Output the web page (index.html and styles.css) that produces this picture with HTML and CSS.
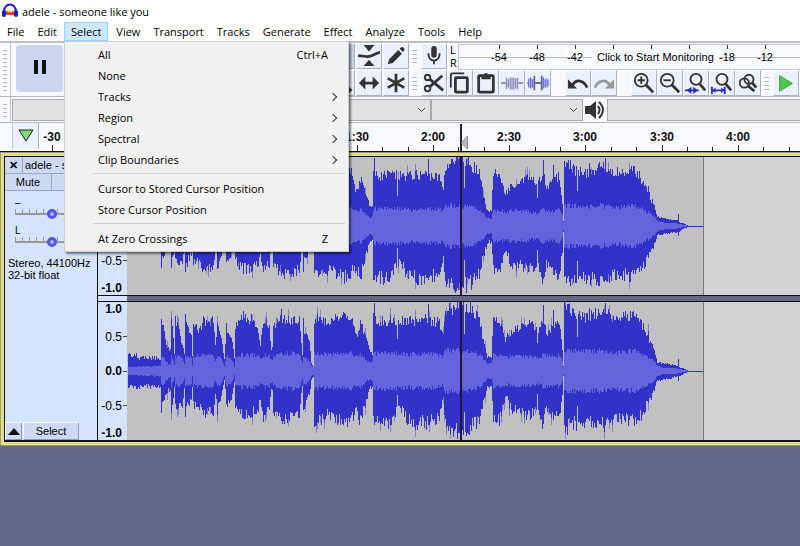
FILE: index.html
```
<!DOCTYPE html>
<html lang="en">
<head>
  <title>adele - someone like you</title>
  <meta charset="utf-8" />
  <meta name="viewport" content="width=device-width, initial-scale=1.0">
  <link rel="stylesheet" href="styles.css">
</head>
<body>

  <header class="titlebar">
    <svg class="logo" viewBox="0 0 16 16" width="16" height="16">
      <path d="M3 10 L5 7 L7 10 L8 6 L9 10 L11 7 L13 10 L13 12 L3 12 Z" fill="#f80" />
      <path d="M3 10.5h10" stroke="#e22" stroke-width="2" />
      <path d="M2 9 C2 -1 14 -1 14 9" fill="none" stroke="#1a1ad0" stroke-width="2" />
      <rect x="0" y="7" width="4" height="7" rx="2" fill="#1a1ad0" />
      <rect x="12" y="7" width="4" height="7" rx="2" fill="#1a1ad0" />
    </svg>
    <h1>adele - someone like you</h1>
  </header>

  <nav class="menubar">
    <button>File</button>
    <button>Edit</button>
    <div class="menu">
      <button class="open">Select</button>
      <ul class="dropdown">
        <li><button>All <span>Ctrl+A</span></button></li>
        <li><button>None</button></li>
        <li><button class="sub">Tracks</button></li>
        <li><button class="sub">Region</button></li>
        <li><button class="sub">Spectral</button></li>
        <li><button class="sub">Clip Boundaries</button></li>
        <li class="separator"></li>
        <li><button>Cursor to Stored Cursor Position</button></li>
        <li><button>Store Cursor Position</button></li>
        <li class="separator"></li>
        <li><button>At Zero Crossings <span>Z</span></button></li>
      </ul>
    </div>
    <button>View</button>
    <button>Transport</button>
    <button>Tracks</button>
    <button>Generate</button>
    <button>Effect</button>
    <button>Analyze</button>
    <button>Tools</button>
    <button>Help</button>
  </nav>

  <div class="toolbars">
    <div class="transport">
      <div class="grabber"></div>
      <button class="pause" aria-label="Pause">
        <svg viewBox="0 0 14 14" width="14" height="14"><path d="M1 0h4v14h-4z M9 0h4v14h-4z" fill="#111" /></svg>
      </button>
    </div>

    <div class="tools">
      <button class="tool selected" aria-label="Selection"></button>
      <button class="tool" aria-label="Envelope">
        <svg viewBox="0 0 24 24">
          <path d="M6 0h12l-6 7z M6 23h12l-6 -7z" fill="#333" />
          <path d="M0 12 C6 11 9 14 14 12 S20 9 24 8" fill="none" stroke="#333" stroke-width="3" />
        </svg>
      </button>
      <button class="tool" aria-label="Draw">
        <svg viewBox="0 0 24 24">
          <path d="M3 21l1.500 -5.500 L14.500 5.500 l4 4 L8.500 19.500 z M16 4l1.500 -1.500 q1.500 -1 3 .5 t.5 3 L19.500 7.500z" fill="#333" />
        </svg>
      </button>
      <button class="tool" aria-label="Zoom">
        <svg viewBox="0 0 24 24"><circle cx="10" cy="10" r="6" fill="none" stroke="#333" stroke-width="3" /><path d="M15 15l7 6" stroke="#333" stroke-width="4" /></svg>
      </button>
      <button class="tool" aria-label="Time Shift">
        <svg viewBox="0 0 24 24"><path d="M1 12l7 -7v5.500h8v-5.500l7 7l-7 7v-5.500h-8v5.500z" fill="#333" /></svg>
      </button>
      <button class="tool" aria-label="Multi">
        <svg viewBox="0 0 24 24"><path d="M12 2v20 M3 7l18 10 M21 7l-18 10" stroke="#333" stroke-width="3" /></svg>
      </button>
    </div>

    <div class="stack">
      <div class="line">
        <div class="grabber"></div>
        <button class="tool" aria-label="Record Meter">
          <svg viewBox="0 0 24 24">
            <rect x="9" y="1" width="6" height="13" rx="3" fill="#333" />
            <path d="M6 9v2a6 6 0 0 0 12 0v-2 M12 17v4" fill="none" stroke="#333" stroke-width="2" />
          </svg>
        </button>
        <div class="channels"><span>L</span><span>R</span></div>
        <div class="meter">
          <span>-54</span><span>-48</span><span>-42</span><span></span><span></span><span></span><span>-18</span><span>-12</span>
          <button class="monitor">Click to Start Monitoring</button>
        </div>
      </div>
      <div class="line">
        <div class="grabber"></div>
        <button class="tool" aria-label="Cut">
          <svg viewBox="0 0 24 24">
            <path d="M7 7.500L22 20 M7 16.500L21 4" stroke="#333" stroke-width="3" />
            <circle cx="5" cy="6" r="3" fill="none" stroke="#333" stroke-width="2" /><circle cx="5" cy="18" r="3" fill="none" stroke="#333" stroke-width="2" />
          </svg>
        </button>
        <button class="tool" aria-label="Copy">
          <svg viewBox="0 0 24 24" fill="none" stroke="#333" stroke-width="2">
            <path d="M2 17v-14q0 -1.500 1.500 -1.500h13" /><rect x="7" y="6" width="13" height="16" rx="1" stroke-width="3" />
          </svg>
        </button>
        <button class="tool" aria-label="Paste">
          <svg viewBox="0 0 24 24"><rect x="4" y="4" width="16" height="18" rx="1" fill="none" stroke="#333" stroke-width="3" /><path d="M7 3h3a2 2 0 0 1 4 0h3v5h-10z" fill="#333" /></svg>
        </button>
        <button class="tool" aria-label="Trim">
          <svg viewBox="0 0 24 24" fill="none" stroke="#8d90b8"><path d="M0 12h6 M19 12h5" stroke-width="2" /><path d="M6 6v13 M8 8v9 M10 6v13 M12 6v13 M14 6v13 M16 7v11 M18 6v13" stroke-width="1.500" /></svg>
        </button>
        <button class="tool" aria-label="Silence">
          <svg viewBox="0 0 24 24" fill="none" stroke="#6b70d0" stroke-width="1.500"><path d="M0 12h2v-5v10 M4 6v12 M6 8v9 M18 6v12 M20 8v9 M22 7v10 M24 9v6" /><path d="M8 4v16 M16 4v16 M8 12h8" stroke="#666a88" stroke-width="2" /></svg>
        </button>
        <button class="tool group" aria-label="Undo">
          <svg viewBox="0 0 24 24"><path d="M6 14C10 8 18 8 22 17" fill="none" stroke="#333" stroke-width="3" /><path d="M1 8v10h10z" fill="#333" /></svg>
        </button>
        <button class="tool" aria-label="Redo">
          <svg viewBox="0 0 24 24"><path d="M18 14C14 8 6 8 2 17" fill="none" stroke="#999" stroke-width="3" /><path d="M23 8v10h-10z" fill="#999" /></svg>
        </button>
        <button class="tool group" aria-label="Zoom In">
          <svg viewBox="0 0 24 24" fill="none" stroke="#333"><circle cx="9" cy="9" r="7" stroke-width="2" /><path d="M14 14l8 8" stroke-width="3" /><path d="M5 9h8 M9 5v8" stroke-width="2" /></svg>
        </button>
        <button class="tool" aria-label="Zoom Out">
          <svg viewBox="0 0 24 24" fill="none" stroke="#333"><circle cx="9" cy="9" r="7" stroke-width="2" /><path d="M14 14l8 8" stroke-width="3" /><path d="M5 9h8" stroke-width="2" /></svg>
        </button>
        <button class="tool" aria-label="Fit Selection">
          <svg viewBox="0 0 24 24" fill="none" stroke="#333"><circle cx="12" cy="8" r="6" stroke-width="2" /><path d="M16 13l6 7" stroke-width="3" /><path d="M0 20h15" stroke="#2b2bd0" stroke-width="2" /><path d="M7 16v8l-5 -4z M9 16v8l5 -4z" fill="#2b2bd0" stroke="none" /></svg>
        </button>
        <button class="tool" aria-label="Fit Project">
          <svg viewBox="0 0 24 24" fill="none" stroke="#333"><circle cx="12" cy="8" r="6" stroke-width="2" /><path d="M16 13l6 7" stroke-width="3" /><path d="M1 20h14 M1 16v8 M15 16v8" stroke="#2b2bd0" stroke-width="2" /><path d="M1 20l4 -3v6z M15 20l-4 -3v6z" fill="#2b2bd0" stroke="none" /></svg>
        </button>
        <button class="tool" aria-label="Zoom Toggle">
          <svg viewBox="0 0 24 24" fill="none" stroke="#333" stroke-width="2"><circle cx="13" cy="8" r="5" /><circle cx="8" cy="12" r="5" /><path d="M16 11l5 6 M12 15l7 6" stroke-width="3" /></svg>
        </button>
        <div class="grabber"></div>
        <button class="tool" aria-label="Play at Speed">
          <svg viewBox="0 0 24 24"><path d="M5 4v17l14 -8.500z" fill="#4fc84f" stroke="#3a9a3a" /></svg>
        </button>
      </div>
    </div>
  </div>

  <div class="devices">
    <div class="grabber"></div>
    <select class="recording" aria-label="Recording Device"><option></option></select>
    <select class="channel-count" aria-label="Recording Channels"><option></option></select>
    <svg class="speaker" viewBox="0 0 22 20" width="22" height="20">
      <path d="M1 6h5l6 -5v18l-6 -5h-5z" fill="#333" />
      <path d="M14 6q3 4 0 8 M15 2q8 8 0 16" fill="none" stroke="#333" stroke-width="2" />
    </svg>
    <select class="playback" aria-label="Playback Device"><option></option></select>
  </div>

  <div class="timeline">
    <button class="pin" aria-label="Pinned Head">
      <svg viewBox="0 0 16 14" width="16" height="14"><path d="M1 1h14l-7 11z" fill="#7ed67e" stroke="#222" /></svg>
    </button>
    <svg class="ruler" height="28" id="ruler"></svg>
  </div>

  <main class="track">
    <section class="panel">
      <div class="row name"><button class="close" aria-label="Close">&#x2715;</button><button class="grow">adele - s</button></div>
      <div class="row"><button class="mute">Mute</button><button class="grow" aria-label="Solo"></button></div>
      <div class="slider">
        <label for="gain">&ndash;</label>
        <input type="range" id="gain" value="50">
      </div>
      <div class="slider">
        <label for="pan">L</label>
        <input type="range" id="pan" value="50">
      </div>
      <p>Stereo, 44100Hz<br>32-bit float</p>
      <div class="bottom">
        <button class="collapse" aria-label="Collapse"><svg viewBox="0 0 12 7" width="12" height="7"><path d="M0 7h12l-6 -7z" fill="#111" /></svg></button>
        <button class="select-track">Select</button>
      </div>
    </section>
    <div class="views">
      <div class="view">
        <ol class="scale covered"><li></li><li></li><li></li><li>-0.5</li><li>-1.0</li></ol>
        <svg class="wave" id="left" width="577" height="138"></svg>
      </div>
      <div class="gap"></div>
      <div class="view">
        <ol class="scale"><li>1.0</li><li>0.5</li><li>0.0</li><li>-0.5</li><li>-1.0</li></ol>
        <svg class="wave" id="right" width="577" height="138"></svg>
      </div>
    </div>
  </main>

  <script src="wave.js"></script>
</body>
</html>
```

FILE: styles.css
```
* {
  box-sizing: border-box;
}

body {
  margin: 0;
  min-height: 100vh;
  background: #646785;
  color: #000;
  font-family: "Open Sans", "Noto Sans", sans-serif;
  font-size: 12px;
}

button {
  margin: 0;
  padding: 0;
  border: 0;
  background: none;
  font: inherit;
  color: inherit;
}

.titlebar {
  display: flex;
  align-items: center;
  gap: 4px;
  height: 22px;
  padding-left: 2px;
  background: #fff;
}

h1 {
  margin: 0;
  font-size: 11px;
  font-weight: normal;
}

/* menus */

.menubar {
  display: flex;
  gap: 1px;
  height: 19px;
  padding-left: 1px;
  background: #fff;
  font-size: 11px;
}

.menubar > button,
.menu > button {
  height: 19px;
  padding: 0 6px;
}

.menu {
  position: relative;
  margin-right: 1px;
}

.menu > .open {
  background: #cce8ff;
  border: 1px solid #99d1ff;
}

.dropdown {
  position: absolute;
  z-index: 2;
  top: 19px;
  left: 0;
  width: 285px;
  margin: 0;
  padding: 2px 0;
  list-style: none;
  background: #f1f1f1;
  border: 1px solid #ccc;
  box-shadow: 2px 2px 2px rgba(0, 0, 0, 0.5);
}

.dropdown button {
  display: flex;
  justify-content: space-between;
  align-items: center;
  width: 100%;
  height: 21px;
  padding: 0 20px 0 33px;
}

.dropdown .sub::after {
  content: "";
  width: 5px;
  height: 5px;
  margin-right: -8px;
  border: solid #333;
  border-width: 1px 1px 0 0;
  transform: rotate(45deg);
}

.separator {
  height: 1px;
  margin: 3px 3px 4px 28px;
  background: #d0d0d0;
}

/* toolbars */

.toolbars {
  display: flex;
  height: 56px;
  border-top: 2px solid #c0c0c4;
  border-bottom: 1px solid #b8b8c0;
  background: #f7f9ff;
}

.grabber {
  flex: none;
  width: 11px;
  border-right: 1px solid #c4c4cc;
  background: repeating-linear-gradient(#f7f9ff 0 3px, #bbb 3px 4px) content-box;
  padding: 4px 3px;
}

.transport {
  display: flex;
  width: 329px;
}

.pause {
  width: 47px;
  height: 47px;
  margin: 2px 0 0 5px;
  border-radius: 4px;
  background: #cad6f0;
}

.tools {
  display: grid;
  grid-template-columns: repeat(3, 26px);
  grid-template-rows: 26px 26px;
  gap: 1px;
}

.tool {
  flex: none;
  display: grid;
  place-items: center;
  width: 26px;
  height: 26px;
  border: 1px solid #fff;
  border-right-color: #a8b0c4;
  border-bottom-color: #a8b0c4;
  background: #eaf0fd;
}

.tool svg {
  width: 22px;
  height: 22px;
}

.selected {
  background: #c8d4ee;
}

.stack {
  flex: 1;
  min-width: 0;
}

.line {
  display: flex;
  height: 27px;
  overflow: hidden;
}

.line .grabber {
  border: 0;
  margin-right: 1px;
}

.group {
  margin-left: 14px;
}

.channels {
  display: grid;
  align-content: start;
  width: 11px;
  padding-left: 3px;
  font-size: 11px;
  line-height: 13px;
}

.meter {
  flex: 1;
  position: relative;
  display: flex;
  height: 26px;
  margin-top: 1px;
  padding-left: 21px;
  border: 1px solid #c4c4cc;
  border-right: 0;
  background: linear-gradient(#bbb, #bbb) 0 12px / 100% 1px no-repeat;
  font: 11px/24px "Liberation Sans", sans-serif;
}

.meter span {
  flex: none;
  width: 38px;
  text-align: center;
  background: linear-gradient(#333, #333) 50% 0 / 1px 4px no-repeat;
}

.monitor {
  position: absolute;
  left: 133px;
  top: 4px;
  padding: 0 5px;
  background: #f7f9ff;
  line-height: 17px;
  white-space: nowrap;
}

/* device row */

.devices {
  display: flex;
  height: 26px;
  background: #f7f9ff;
  border-bottom: 1px solid #b8b8c0;
}

.devices select {
  appearance: none;
  height: 22px;
  margin-top: 2px;
  border: 1px solid #aaa;
  border-radius: 0;
  background: #e1e1e1 url("data:image/svg+xml,%3Csvg xmlns='http://www.w3.org/2000/svg' width='9' height='6'%3E%3Cpath d='M1 1l3.500 3.500L8 1' fill='none' stroke='%23444'/%3E%3C/svg%3E") right 4px center no-repeat;
}

.devices .recording {
  width: 419px;
  margin-left: 1px;
}

.devices .channel-count {
  width: 152px;
}

.speaker {
  margin: 3px 1px 0 1px;
}

.devices .playback {
  flex: 1;
  border-right: 0;
  background-image: none;
}

/* ruler */

.timeline {
  display: flex;
  height: 30px;
  background: #f7f9ff;
  border-bottom: 2px solid #111;
}

.pin {
  display: grid;
  place-items: center;
  width: 27px;
  height: 26px;
  margin-left: 12px;
  border-left: 1px solid #c4c4cc;
  border-right: 1px solid #a8b0c4;
  background: #eaf0fd;
}

.ruler {
  flex: 1;
  min-width: 0;
  font: bold 12px "Liberation Sans", sans-serif;
}

/* track */

.track {
  display: flex;
  margin-left: 1px;
  border: solid #e2df84;
  border-width: 3px 0 3px 3px;
  outline: 1px solid #9a9a80;
}

.panel {
  display: flex;
  flex-direction: column;
  width: 94px;
  border: solid #111;
  border-width: 1px 1px 2px 1px;
  background: #d4e4ff;
  font: 11px "Liberation Sans", sans-serif;
}

.row {
  display: flex;
  height: 17px;
  border-bottom: 1px solid #9aa6c4;
  background: #ccd9f2;
}

.row button + button {
  border-left: 1px solid #9aa6c4;
}

.grow {
  flex: 1;
  padding-left: 2px;
  text-align: left;
}

.close {
  width: 17px;
  font-weight: bold;
}

.mute {
  width: 46px;
}

.slider {
  height: 28px;
  padding: 4px 6px 0 10px;
}

.row + .slider {
  margin-top: 3px;
}

.slider label {
  display: block;
  height: 10px;
  line-height: 10px;
  font-size: 10px;
}

.slider input {
  appearance: none;
  display: block;
  width: 73px;
  height: 11px;
  margin: 0;
  background:
    linear-gradient(#999, #999) 0 5px / 100% 2px no-repeat,
    repeating-linear-gradient(90deg, #999 0 1px, transparent 1px 7px) 0 1px / 100% 4px no-repeat;
}

.slider input::-webkit-slider-thumb {
  appearance: none;
  width: 10px;
  height: 10px;
  border: 3px solid #4f55e6;
  border-radius: 50%;
  background: #a8b4f0;
}

.panel p {
  margin: 7px 0 0 3px;
  line-height: 12px;
  white-space: nowrap;
}

.bottom {
  display: flex;
  gap: 1px;
  height: 18px;
  margin-top: auto;
}

.bottom button {
  border: 1px solid #fff;
  border-right-color: #8e9ab8;
  border-bottom-color: #8e9ab8;
  background: #ccd9f2;
}

.collapse {
  width: 17px;
}

.select-track {
  width: 56px;
}

.views {
  flex: 1;
  min-width: 0;
  border: solid #111;
  border-width: 1px 0 2px;
  background: #d4d4d4;
}

.view {
  display: flex;
  height: 138px;
}

.scale {
  display: flex;
  flex-direction: column;
  justify-content: space-between;
  flex: none;
  width: 29px;
  margin: 0;
  padding: 0 5px 0 0;
  list-style: none;
  text-align: right;
  background: #d4e4ff;
  font: 12px/14px "Liberation Sans", sans-serif;
}

.scale li {
  height: 14px;
}

.scale li:nth-child(odd) {
  font-weight: bold;
}

.scale li:nth-child(3),
.scale li:nth-child(even) {
  margin-right: -5px;
  padding-right: 5px;
  background: linear-gradient(#444, #444) right center / 4px 1px no-repeat;
}

.scale li:nth-child(3) {
  margin-top: 7px;
  margin-bottom: 7px;
}

.wave {
  flex: none;
  background: #c0c0c0;
  border-right: 1px solid #777;
}

.gap {
  height: 7px;
  border: solid #111;
  border-width: 1px 0;
  background: linear-gradient(90deg, #d4e4ff 29px, #646785 29px);
}
```

FILE: wave.js
```
// envelope points: [x, peak above, peak below, rms]
var envelope = [
  [0, 15, 16, 4], [33, 13, 15, 5], [34, 52, 38, 12], [36, 43, 30, 13], [39, 26, 20, 8],
  [43, 20, 18, 6], [44, 50, 46, 14], [46, 32, 25, 10], [47, 18, 16, 6], [48, 50, 34, 15],
  [52, 42, 34, 15], [55, 24, 36, 12], [57, 18, 16, 6], [58, 53, 38, 15], [60, 42, 36, 13],
  [64, 36, 26, 13], [65, 16, 14, 5], [66, 46, 34, 14], [72, 42, 35, 15], [76, 50, 42, 16],
  [86, 50, 40, 15], [88, 26, 20, 10], [90, 50, 40, 15], [94, 36, 26, 13], [97, 12, 10, 5],
  [99, 44, 32, 14], [104, 36, 28, 12], [107, 13, 10, 4], [108, 46, 34, 14], [116, 54, 42, 16],
  [124, 50, 42, 16], [131, 42, 36, 15], [133, 28, 28, 12], [136, 49, 44, 16], [142, 45, 38, 15],
  [144, 22, 20, 12], [145, 22, 20, 12], [146, 47, 38, 15], [154, 52, 46, 17], [165, 51, 46, 17],
  [172, 50, 44, 16], [175, 16, 16, 8], [176, 52, 44, 15], [177, 38, 34, 13], [182, 30, 24, 10],
  [184, 9, 10, 5], [186, 5, 5, 4], [187, 52, 50, 17], [200, 50, 44, 16], [217, 54, 50, 17],
  [224, 54, 46, 17], [229, 34, 42, 15], [233, 48, 50, 16], [238, 36, 32, 12], [242, 20, 18, 8],
  [245, 18, 16, 9], [246, 58, 52, 17], [248, 50, 50, 17], [262, 51, 52, 18], [272, 50, 36, 17],
  [282, 50, 50, 16], [298, 52, 52, 17], [312, 48, 46, 16], [316, 38, 28, 14], [318, 60, 54, 20],
  [332, 66, 62, 20], [344, 62, 56, 19], [352, 52, 46, 16], [356, 30, 30, 12], [360, 15, 16, 7],
  [364, 14, 16, 7], [366, 56, 44, 16], [372, 50, 48, 16], [378, 32, 24, 13], [384, 40, 38, 15],
  [394, 46, 40, 15], [402, 48, 44, 14], [411, 42, 38, 13], [416, 54, 54, 16], [419, 36, 38, 15],
  [427, 46, 44, 14], [432, 50, 48, 16], [435, 22, 24, 11], [436, 5, 5, 4], [437, 66, 58, 20],
  [446, 56, 52, 20], [458, 52, 50, 19], [472, 60, 55, 20], [486, 54, 50, 18], [500, 54, 48, 19],
  [507, 56, 50, 20], [514, 47, 44, 17], [519, 38, 34, 14], [524, 26, 26, 11], [528, 17, 15, 8],
  [530, 9, 9, 5], [538, 7, 8, 3], [548, 6, 6, 3], [552, 4, 5, 2], [558, 2, 2, 1],
  [561, 0, 1, 0], [577, 0, 1, 0]
];

// single loud columns, x: peak
var spikes = {34: 52, 44: 53, 58: 57, 76: 55, 85: 55, 116: 60, 124: 57, 154: 62, 247: 68, 301: 67,
  416: 66, 426: 61, 462: 63, 478: 68, 506: 60, 521: 40, 525: 27, 551: 12};
var cuts = [270, 337, 410, 450];

var seed = 7;

function noise() {
  seed = (seed * 16807) % 2147483647;
  return seed / 2147483647;
}

function levelAt(x) {
  var i = 0;
  while (i < envelope.length - 2 && envelope[i + 1][0] <= x) {
    i++;
  }
  var a = envelope[i];
  var b = envelope[i + 1];
  var t = (x - a[0]) / (b[0] - a[0]);
  return [1, 2, 3].map(function(k) {
    return a[k] + (b[k] - a[k]) * t;
  });
}

function bar(x, up, down) {
  up = Math.min(69, Math.round(up));
  down = Math.min(68, Math.round(down));
  return "M" + x + " " + (69 - up) + "h1v" + (up + down) + "h-1z";
}

function drawWave(id) {
  var peaks = "";
  var faint = "";
  var rms = "";

  for (var x = 1; x < 576; x++) {
    var level = levelAt(x);
    // the quiet intro is rougher than the rest
    var rough = x < 34 ? 0.5 : 0.22;
    var up = level[0] * (1 - rough / 2 + noise() * rough);
    var down = level[1] * (0.86 + noise() * 0.3);
    var inner = level[2] * (0.88 + noise() * 0.28);

    if (spikes[x]) {
      up = spikes[x];
      down = spikes[x] * 0.8;
    } else if (cuts.indexOf(x) > -1) {
      up = up * 0.6;
      down = down * 0.6;
    }
    if (level[0] > 20 && noise() > 0.92) {
      faint += bar(x, up + 7, down + 7);
    }
    peaks += bar(x, up, down);
    rms += bar(x, inner, inner);
  }

  document.getElementById(id).innerHTML =
    '<path d="' + faint + '" fill="#8080c4"/>' +
    '<path d="' + peaks + '" fill="#3232c8"/>' +
    '<path d="' + rms + '" fill="#6464dc"/>' +
    '<path d="M334 0v138" stroke="#281438" stroke-width="2"/>';
}

function drawRuler() {
  // labelled every 30 seconds
  var labels = {0: "-30", 4: "1:30", 5: "2:00", 6: "2:30", 7: "3:00", 8: "3:30", 9: "4:00"};
  var marks = "";

  for (var i = 0; i < 31; i++) {
    var x = Math.round(13 + i * 76.2 / 3);
    var major = i % 3 == 0;
    marks += '<path d="M' + x + '.5 ' + (major ? 22 : 24) + 'V28" stroke="#222"/>';
    if (major && labels[i / 3]) {
      marks += '<text x="' + x + '" y="18" text-anchor="middle" fill="#111">' + labels[i / 3] + '</text>';
    }
  }
  marks += '<path d="M422 1V28" stroke="#222" stroke-width="2"/>' +
    '<path d="M428.5 13v13l-6 -6z" fill="#bbb" stroke="#888"/>';
  document.getElementById("ruler").innerHTML = marks;
}

drawWave("left");
drawWave("right");
drawRuler();
```
